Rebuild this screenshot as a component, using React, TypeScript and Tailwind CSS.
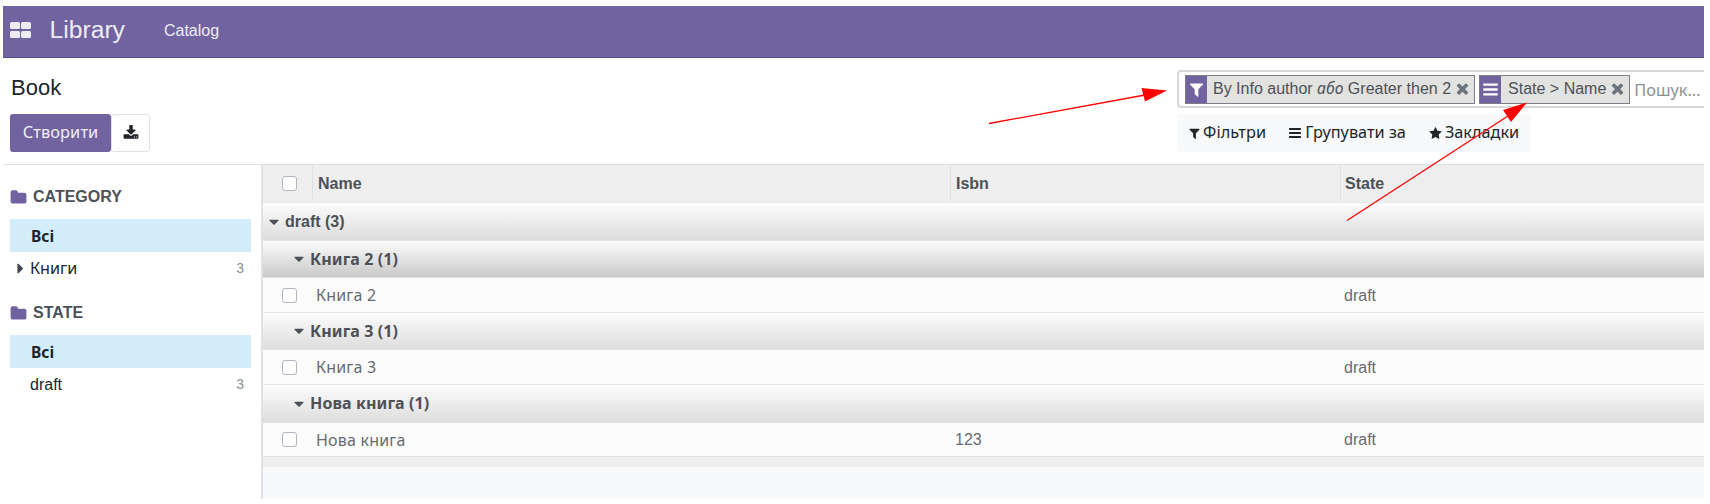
import React from "react";

const noto = "font-['Noto_Sans',sans-serif]";

const paths = {
  filter:
    "M1595 295q17 41-14 70l-493 493v742q0 42-39 59-13 5-25 5-27 0-45-19l-256-256q-19-19-19-45v-486l-493-493q-31-29-14-70 17-39 59-39h1280q42 0 59 39z",
  bars: "M1664 1344v128q0 26-19 45t-45 19h-1408q-26 0-45-19t-19-45v-128q0-26 19-45t45-19h1408q26 0 45 19t19 45zm0-512v128q0 26-19 45t-45 19h-1408q-26 0-45-19t-19-45v-128q0-26 19-45t45-19h1408q26 0 45 19t19 45zm0-512v128q0 26-19 45t-45 19h-1408q-26 0-45-19t-19-45v-128q0-26 19-45t45-19h1408q26 0 45 19t19 45z",
  times:
    "M1490 1322q0 40-28 68l-136 136q-28 28-68 28t-68-28l-294-294-294 294q-28 28-68 28t-68-28l-136-136q-28-28-28-68t28-68l294-294-294-294q-28-28-28-68t28-68l136-136q28-28 68-28t68 28l294 294 294-294q28-28 68-28t68 28l136 136q28 28 28 68t-28 68l-294 294 294 294q28 28 28 68z",
  folder:
    "M1728 608v704q0 92-66 158t-158 66h-1216q-92 0-158-66t-66-158v-960q0-92 66-158t158-66h320q92 0 158 66t66 158v32h672q92 0 158 66t66 158z",
  download:
    "M1344 1344q0-26-19-45t-45-19-45 19-19 45 19 45 45 19 45-19 19-45zm256 0q0-26-19-45t-45-19-45 19-19 45 19 45 45 19 45-19 19-45zm128-224v320q0 40-28 68t-68 28h-1472q-40 0-68-28t-28-68v-320q0-40 28-68t68-28h465l135 136q58 56 136 56t136-56l136-136h464q40 0 68 28t28 68zm-325-569q17 41-14 70l-448 448q-18 19-45 19t-45-19l-448-448q-31-29-14-70 17-39 59-39h256v-448q0-26 19-45t45-19h256q26 0 45 19t19 45v448h256q42 0 59 39z",
  star: "M1728 647q0 22-26 48l-363 354 86 500q1 7 1 20 0 21-10.500 35.500t-30.500 14.500q-19 0-40-12l-449-236-449 236q-22 12-40 12-21 0-31.500-14.500t-10.500-35.500q0-6 2-20l86-500-364-354q-25-27-25-48 0-37 56-46l502-73 225-455q19-41 49-41t49 41l225 455 502 73q56 9 56 46z",
  caretDown: "M1408 704q0 26-19 45l-448 448q-19 19-45 19t-45-19l-448-448q-19-19-19-45t19-45 45-19h896q26 0 45 19t19 45z",
  caretRight: "M1152 896q0 26-19 45l-448 448q-19 19-45 19t-45-19-19-45v-896q0-26 19-45t45-19 45 19l448 448q19 19 19 45z",
};

function Icon({ name, className }: { name: keyof typeof paths; className: string }) {
  return (
    <svg viewBox="0 0 1792 1792" fill="currentColor" className={`shrink-0 ${className}`}>
      <path d={paths[name]} />
    </svg>
  );
}

function Checkbox() {
  return <span className="block size-[15px] rounded-[3px] border border-[#adb5bd] bg-white" />;
}

function SectionTitle({ children }: { children: React.ReactNode }) {
  return (
    <div className="flex h-[20px] items-center font-bold text-[#4c5157]">
      <Icon name="folder" className="mr-[6px] size-[17px] text-[#7163a0]" />
      {children}
    </div>
  );
}

function AllItem() {
  return (
    <div className={`${noto} flex h-[33px] w-[241px] items-center bg-[#d3ecf9] pl-[21px] text-[15.5px] font-bold text-[#212529]`}>
      Всі
    </div>
  );
}

function Facet({ icon, children }: { icon: React.ReactNode; children: React.ReactNode }) {
  return (
    <div className="flex h-[29px] items-center border border-[#7c7f88] bg-[#e2e2e0] text-[#4c5157]">
      <span className="flex h-full w-[21px] items-center justify-center bg-[#7163a0] text-white">{icon}</span>
      <span className="pb-px pl-[6px] whitespace-nowrap">{children}</span>
      <Icon name="times" className="mr-[3px] mb-[2px] ml-[3px] size-[17px] text-[#6c757d]" />
    </div>
  );
}

function Group({ label, className, cyrillic }: { label: string; className: string; cyrillic?: boolean }) {
  return (
    <div className={`flex items-center border-b border-[#dee2e6] font-bold text-[#4c5157] ${className}`}>
      <Icon name="caretDown" className="mr-[3px] size-[16px]" />
      {cyrillic ? <span className={`${noto} pb-px text-[16px] tracking-[0.1px]`}>{label}</span> : <span>{label}</span>}
    </div>
  );
}

function Row({ name, isbn, state, className }: { name: string; isbn?: string; state: string; className: string }) {
  return (
    <div className={`flex items-center border-b border-[#dee2e6] bg-[#fcfcfc] pl-[19px] text-[#666b70] ${className}`}>
      <Checkbox />
      <span className={`${noto} w-[658px] pl-[19px] text-[16px] tracking-[0.2px]`}>{name}</span>
      <span className="w-[389px]">{isbn}</span>
      <span className="pt-px">{state}</span>
    </div>
  );
}

export default function App() {
  return (
    <div className="relative h-[504px] w-[1710px] overflow-hidden bg-white pt-[6px] pr-[6px] pl-[3px] font-['Liberation_Sans',Arial,sans-serif] text-[16px] leading-[20px]">
      <header className="flex h-[52px] items-center border-b border-[#5c4f88] bg-[#7163a0] pb-[4px] pl-[7px] text-[#eeecf3]">
        <div className="grid grid-cols-2 gap-x-[1.500px] gap-y-[2px]">
          <span className="h-[7px] w-[9.500px] rounded-[1.500px] bg-[#eeecf3]" />
          <span className="h-[7px] w-[9.500px] rounded-[1.500px] bg-[#eeecf3]" />
          <span className="h-[7px] w-[9.500px] rounded-[1.500px] bg-[#eeecf3]" />
          <span className="h-[7px] w-[9.500px] rounded-[1.500px] bg-[#eeecf3]" />
        </div>
        <span className="ml-[19px] text-[24.700px]">Library</span>
        <span className="ml-[39px] pt-[2px]">Catalog</span>
      </header>

      <section className="flex h-[107px] justify-between border-b border-[#dee2e6]">
        <div className="pl-[7px]">
          <h1 className="pt-[19px] pl-px text-[22px] leading-[22px] text-[#212529]">Book</h1>
          <div className="mt-[15px] flex">
            <button className={`${noto} h-[38px] w-[101px] rounded-[3px] bg-[#7163a0] pb-[2px] text-[16.300px] tracking-[0.15px] text-[#f1eff5]`}>
              Створити
            </button>
            <button className="flex h-[38px] w-[39px] items-center justify-center rounded-[3px] border border-[#dee2e6] text-[#212529]">
              <Icon name="download" className="size-[16px]" />
            </button>
          </div>
        </div>
        <div className="w-[527px]">
          <div className="mt-[12px] flex h-[38px] items-center gap-[4px] overflow-hidden rounded-l-[4px] border-2 border-r-0 border-[#d8d8d8] pl-[6px]">
            <Facet icon={<Icon name="filter" className="size-[17px]" />}>
              By Info author <i className={`${noto} text-[15.700px]`}>або</i> Greater then 2
            </Facet>
            <Facet icon={<Icon name="bars" className="size-[17px]" />}>
              <span className="pl-px">State &gt; Name</span>
            </Facet>
            <span className={`${noto} pt-[2px] text-[16.300px] text-[#8a8f94]`}>Пошук...</span>
          </div>
          <div className={`${noto} mt-[6px] flex h-[38px] w-[354px] items-center rounded-[3px] bg-[#f8f9fa] pl-[11px] text-[16.300px] text-[#212529]`}>
            <Icon name="filter" className="mr-[2px] size-[13px]" />
            <span className="pb-[2px] tracking-[0.1px]">Фільтри</span>
            <Icon name="bars" className="mr-[3px] ml-[22px] size-[14px]" />
            <span className="pb-[2px]">Групувати за</span>
            <Icon name="star" className="mr-[3px] ml-[23px] size-[13px]" />
            <span className="pb-[2px]">Закладки</span>
          </div>
        </div>
      </section>

      <main className="flex h-[334px]">
        <aside className="w-[260px] shrink-0 border-r-2 border-[#dee2e6] pt-[22px] pl-[7px]">
          <SectionTitle>CATEGORY</SectionTitle>
          <div className="h-[12px]" />
          <AllItem />
          <div className="flex h-[33px] w-[241px] items-center pr-[7px] pb-px text-[#212529]">
            <Icon name="caretRight" className="mr-px ml-[2px] size-[17px] text-[#3b434b]" />
            <span className={`${noto} text-[16.200px]`}>Книги</span>
            <span className="ml-auto text-[14px] text-[#8a8f94]">3</span>
          </div>
          <div className="h-[18px]" />
          <SectionTitle>STATE</SectionTitle>
          <div className="h-[12px]" />
          <AllItem />
          <div className="flex h-[33px] w-[241px] items-center pr-[7px] pl-[20px] text-[#212529]">
            <span className="pt-px">draft</span>
            <span className="ml-auto pb-[2px] text-[14px] text-[#8a8f94]">3</span>
          </div>
        </aside>

        <div className="flex-1 bg-[#f8f9fb]">
          <div className="flex h-[38px] items-center border-b border-[#e4e8ec] bg-[#eeeeee] pb-px pl-[19px] font-bold text-[#4c5157]">
            <Checkbox />
            <span className="ml-[15px] flex h-[35px] w-[638px] items-center border-l border-[#dcdfe3] pt-px pl-[5px]">Name</span>
            <span className="flex h-[35px] w-[390px] items-center border-l border-[#dcdfe3] pt-px pl-[5px]">Isbn</span>
            <span className="flex h-[35px] items-center border-l border-[#dcdfe3] pt-px pl-[4px]">State</span>
          </div>
          <Group label="draft (3)" className="h-[38px] bg-gradient-to-b from-[#fcfcfc] to-[#dddddd] pl-[3px]" />
          <Group cyrillic label="Книга 2 (1)" className="h-[37px] bg-gradient-to-b from-[#fcfcfc] to-[#c9c9c9] pl-[28px]" />
          <Row name="Книга 2" state="draft" className="h-[35px]" />
          <Group cyrillic label="Книга 3 (1)" className="h-[37px] bg-gradient-to-b from-[#fcfcfc] to-[#dddddd] pl-[28px]" />
          <Row name="Книга 3" state="draft" className="h-[35px]" />
          <Group cyrillic label="Нова книга (1)" className="h-[38px] bg-gradient-to-b from-[#fcfcfc] to-[#dddddd] pl-[28px]" />
          <Row name="Нова книга" isbn="123" state="draft" className="h-[34px]" />
          <div className="h-[10px] bg-[#eeeeee]" />
        </div>
      </main>

      <svg className="pointer-events-none absolute top-0 left-0" width="1710" height="504" fill="red" stroke="red">
        <path d="M989 123.5 1145 95" strokeWidth="1.3" />
        <path d="M1167 90.5 1141.5 88 1145 101.5Z" stroke="none" />
        <path d="M1347 220.500 1508 116" strokeWidth="1.3" />
        <path d="M1527 102.500 1503 110 1511 122Z" stroke="none" />
      </svg>
    </div>
  );
}
